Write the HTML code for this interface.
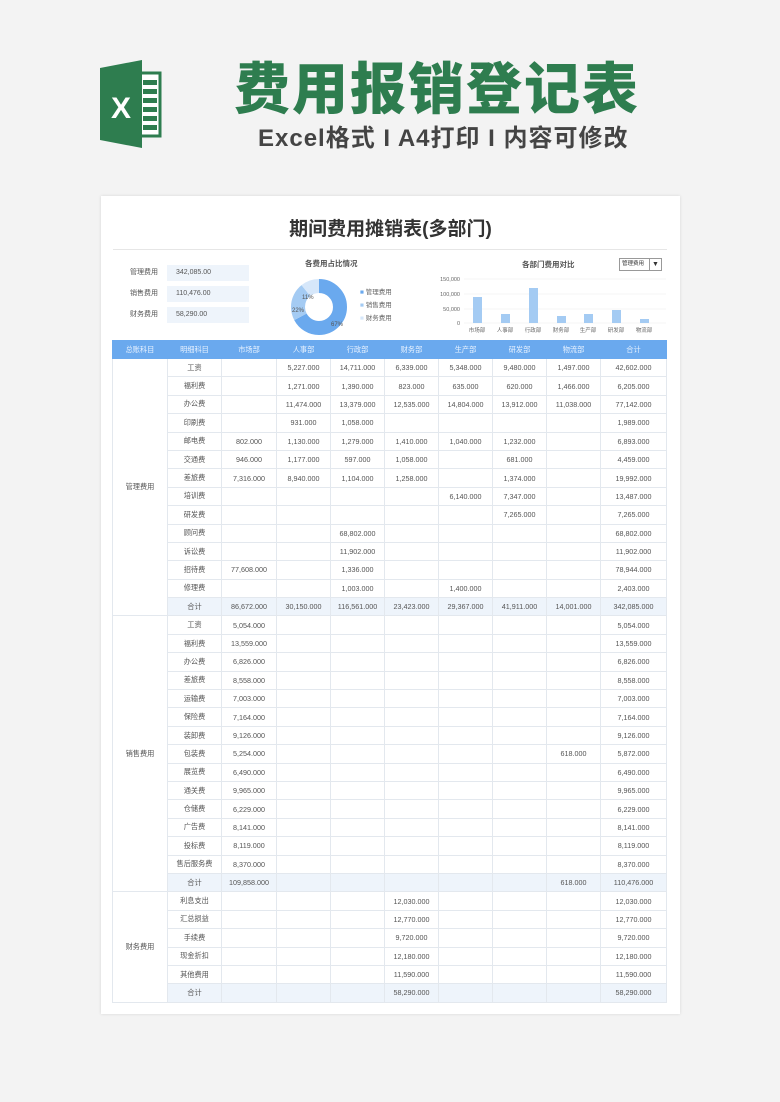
<!DOCTYPE html>
<html><head><meta charset="utf-8">
<style>
*{margin:0;padding:0;box-sizing:border-box}
body{width:780px;height:1102px;background:#f3f3f3;font-family:"Liberation Sans","Noto Sans CJK SC",sans-serif;position:relative;overflow:hidden}
.abs{position:absolute}
.card{left:101px;top:196px;width:579px;height:818px;background:#fff;box-shadow:0 0 3px rgba(0,0,0,.12)}
table{position:absolute;left:112px;top:340px;border-collapse:collapse;table-layout:fixed;font-size:7.2px;color:#555}
td,th{border:1px solid #e3e8ee;height:18.4px;text-align:center;white-space:nowrap;overflow:hidden;font-weight:normal;padding:0}
th{background:#6aa9ee;color:#e8f2ff;border-color:#6aa9ee;height:18px}
tr.tot td{background:#eef4fb}
.lbl{font-size:7px;color:#555;line-height:16px}
.box{background:#eef4fb;font-size:7px;color:#555;padding-left:9px;line-height:16px;height:16px;width:82px;left:167px}
</style></head><body>
<svg class="abs" style="left:100px;top:56px" width="62" height="96" viewBox="0 0 62 96">
<rect x="36" y="17" width="24" height="63" fill="#fff" stroke="#2e7d4f" stroke-width="3"/>
<g fill="#2e7d4f"><rect x="43" y="24" width="14" height="5"/><rect x="43" y="33" width="14" height="5"/><rect x="43" y="42" width="14" height="5"/><rect x="43" y="51" width="14" height="5"/><rect x="43" y="60" width="14" height="5"/><rect x="43" y="69" width="14" height="5"/></g>
<path d="M0 12 L42 4 L42 92 L0 84 Z" fill="#2e7d4f"/>
<text x="21" y="62" font-family="Liberation Sans" font-weight="bold" font-size="30" fill="#fff" text-anchor="middle">X</text>
</svg>
<div class="abs" style="left:234px;top:58px;font-size:56px;font-weight:900;color:#2e7d4f;letter-spacing:2px;line-height:64px;white-space:nowrap">费用报销登记表</div>
<div class="abs" style="left:258px;top:124px;font-size:24px;font-weight:bold;color:#444;line-height:30px;letter-spacing:1px;white-space:nowrap">Excel格式 I A4打印 I 内容可修改</div>

<div class="abs card"></div>
<div class="abs" style="left:101px;top:214px;width:579px;text-align:center;font-size:19px;font-weight:bold;color:#333">期间费用摊销表(多部门)</div>
<div class="abs" style="left:113px;top:249px;width:554px;height:1px;background:#e6e6e6"></div>

<div class="abs lbl" style="left:130px;top:265px">管理费用</div>
<div class="abs lbl" style="left:130px;top:286px">销售费用</div>
<div class="abs lbl" style="left:130px;top:307px">财务费用</div>
<div class="abs box" style="top:265px">342,085.00</div>
<div class="abs box" style="top:286px">110,476.00</div>
<div class="abs box" style="top:307px">58,290.00</div>

<div class="abs" style="left:305px;top:258px;font-size:7.5px;font-weight:bold;color:#555">各费用占比情况</div>
<svg class="abs" style="left:288px;top:276px" width="62" height="62" viewBox="-31 -31 62 62">
<circle r="21" fill="none" stroke="#6aa9ee" stroke-width="14" stroke-dasharray="88.6 132" transform="rotate(-90)"/>
<circle r="21" fill="none" stroke="#a4cbf3" stroke-width="14" stroke-dasharray="0 88.6 29 132" transform="rotate(-90)"/>
<circle r="21" fill="none" stroke="#d6e7fa" stroke-width="14" stroke-dasharray="0 117.6 14.4 132" transform="rotate(-90)"/>
<text x="-17" y="-8" font-size="6" fill="#555">11%</text>
<text x="-27" y="5" font-size="6" fill="#555">22%</text>
<text x="12" y="19" font-size="6" fill="#555">67%</text>
</svg>
<div class="abs" style="left:360px;top:286px;font-size:6.5px;color:#666;line-height:13px">
<div><span style="color:#6aa9ee">■</span> 管理费用</div><div><span style="color:#a4cbf3">■</span> 销售费用</div><div><span style="color:#d6e7fa">■</span> 财务费用</div></div>

<div class="abs" style="left:522px;top:259px;font-size:7.5px;font-weight:bold;color:#555">各部门费用对比</div>
<div class="abs" style="left:619px;top:258px;width:43px;height:13px;border:1px solid #999;font-size:5.5px;line-height:11px;padding-left:2px;color:#333;background:#fff">管理费用<span style="position:absolute;right:0;top:0;width:12px;height:11px;border-left:1px solid #999;text-align:center;font-size:7px">▼</span></div>
<svg class="abs" style="left:430px;top:272px" width="240" height="64">
<g font-size="5.5" fill="#666" text-anchor="end"><text x="30" y="9">150,000</text><text x="30" y="24">100,000</text><text x="30" y="39">50,000</text><text x="30" y="53">0</text></g>
<g stroke="#eee" stroke-width=".6"><line x1="34" y1="7" x2="236" y2="7"/><line x1="34" y1="22" x2="236" y2="22"/><line x1="34" y1="37" x2="236" y2="37"/><line x1="34" y1="51" x2="236" y2="51"/></g>
<g fill="#a4cbf3"><rect x="43" y="25" width="9" height="26"/><rect x="71" y="42" width="9" height="9"/><rect x="99" y="16" width="9" height="35"/><rect x="127" y="44" width="9" height="7"/><rect x="154" y="42" width="9" height="9"/><rect x="182" y="38" width="9" height="13"/><rect x="210" y="47" width="9" height="4"/></g>
<g font-size="5.5" fill="#666" text-anchor="middle"><text x="47" y="60">市场部</text><text x="75" y="60">人事部</text><text x="103" y="60">行政部</text><text x="131" y="60">财务部</text><text x="158" y="60">生产部</text><text x="186" y="60">研发部</text><text x="214" y="60">物流部</text></g>
</svg>

<table>
<colgroup><col style="width:55px"><col style="width:54px"><col style="width:55px"><col style="width:54px"><col style="width:54px"><col style="width:54px"><col style="width:54px"><col style="width:54px"><col style="width:54px"><col style="width:66px"></colgroup>
<tr><th>总账科目</th><th>明细科目</th><th>市场部</th><th>人事部</th><th>行政部</th><th>财务部</th><th>生产部</th><th>研发部</th><th>物流部</th><th>合计</th></tr>
<tr><td rowspan="14">管理费用</td><td>工资</td><td></td><td>5,227.000</td><td>14,711.000</td><td>6,339.000</td><td>5,348.000</td><td>9,480.000</td><td>1,497.000</td><td>42,602.000</td></tr>
<tr><td>福利费</td><td></td><td>1,271.000</td><td>1,390.000</td><td>823.000</td><td>635.000</td><td>620.000</td><td>1,466.000</td><td>6,205.000</td></tr>
<tr><td>办公费</td><td></td><td>11,474.000</td><td>13,379.000</td><td>12,535.000</td><td>14,804.000</td><td>13,912.000</td><td>11,038.000</td><td>77,142.000</td></tr>
<tr><td>印刷费</td><td></td><td>931.000</td><td>1,058.000</td><td></td><td></td><td></td><td></td><td>1,989.000</td></tr>
<tr><td>邮电费</td><td>802.000</td><td>1,130.000</td><td>1,279.000</td><td>1,410.000</td><td>1,040.000</td><td>1,232.000</td><td></td><td>6,893.000</td></tr>
<tr><td>交通费</td><td>946.000</td><td>1,177.000</td><td>597.000</td><td>1,058.000</td><td></td><td>681.000</td><td></td><td>4,459.000</td></tr>
<tr><td>差旅费</td><td>7,316.000</td><td>8,940.000</td><td>1,104.000</td><td>1,258.000</td><td></td><td>1,374.000</td><td></td><td>19,992.000</td></tr>
<tr><td>培训费</td><td></td><td></td><td></td><td></td><td>6,140.000</td><td>7,347.000</td><td></td><td>13,487.000</td></tr>
<tr><td>研发费</td><td></td><td></td><td></td><td></td><td></td><td>7,265.000</td><td></td><td>7,265.000</td></tr>
<tr><td>顾问费</td><td></td><td></td><td>68,802.000</td><td></td><td></td><td></td><td></td><td>68,802.000</td></tr>
<tr><td>诉讼费</td><td></td><td></td><td>11,902.000</td><td></td><td></td><td></td><td></td><td>11,902.000</td></tr>
<tr><td>招待费</td><td>77,608.000</td><td></td><td>1,336.000</td><td></td><td></td><td></td><td></td><td>78,944.000</td></tr>
<tr><td>修理费</td><td></td><td></td><td>1,003.000</td><td></td><td>1,400.000</td><td></td><td></td><td>2,403.000</td></tr>
<tr class="tot"><td>合计</td><td>86,672.000</td><td>30,150.000</td><td>116,561.000</td><td>23,423.000</td><td>29,367.000</td><td>41,911.000</td><td>14,001.000</td><td>342,085.000</td></tr>
<tr><td rowspan="15">销售费用</td><td>工资</td><td>5,054.000</td><td></td><td></td><td></td><td></td><td></td><td></td><td>5,054.000</td></tr>
<tr><td>福利费</td><td>13,559.000</td><td></td><td></td><td></td><td></td><td></td><td></td><td>13,559.000</td></tr>
<tr><td>办公费</td><td>6,826.000</td><td></td><td></td><td></td><td></td><td></td><td></td><td>6,826.000</td></tr>
<tr><td>差旅费</td><td>8,558.000</td><td></td><td></td><td></td><td></td><td></td><td></td><td>8,558.000</td></tr>
<tr><td>运输费</td><td>7,003.000</td><td></td><td></td><td></td><td></td><td></td><td></td><td>7,003.000</td></tr>
<tr><td>保险费</td><td>7,164.000</td><td></td><td></td><td></td><td></td><td></td><td></td><td>7,164.000</td></tr>
<tr><td>装卸费</td><td>9,126.000</td><td></td><td></td><td></td><td></td><td></td><td></td><td>9,126.000</td></tr>
<tr><td>包装费</td><td>5,254.000</td><td></td><td></td><td></td><td></td><td></td><td>618.000</td><td>5,872.000</td></tr>
<tr><td>展览费</td><td>6,490.000</td><td></td><td></td><td></td><td></td><td></td><td></td><td>6,490.000</td></tr>
<tr><td>通关费</td><td>9,965.000</td><td></td><td></td><td></td><td></td><td></td><td></td><td>9,965.000</td></tr>
<tr><td>仓储费</td><td>6,229.000</td><td></td><td></td><td></td><td></td><td></td><td></td><td>6,229.000</td></tr>
<tr><td>广告费</td><td>8,141.000</td><td></td><td></td><td></td><td></td><td></td><td></td><td>8,141.000</td></tr>
<tr><td>投标费</td><td>8,119.000</td><td></td><td></td><td></td><td></td><td></td><td></td><td>8,119.000</td></tr>
<tr><td>售后服务费</td><td>8,370.000</td><td></td><td></td><td></td><td></td><td></td><td></td><td>8,370.000</td></tr>
<tr class="tot"><td>合计</td><td>109,858.000</td><td></td><td></td><td></td><td></td><td></td><td>618.000</td><td>110,476.000</td></tr>
<tr><td rowspan="6">财务费用</td><td>利息支出</td><td></td><td></td><td></td><td>12,030.000</td><td></td><td></td><td></td><td>12,030.000</td></tr>
<tr><td>汇总损益</td><td></td><td></td><td></td><td>12,770.000</td><td></td><td></td><td></td><td>12,770.000</td></tr>
<tr><td>手续费</td><td></td><td></td><td></td><td>9,720.000</td><td></td><td></td><td></td><td>9,720.000</td></tr>
<tr><td>现金折扣</td><td></td><td></td><td></td><td>12,180.000</td><td></td><td></td><td></td><td>12,180.000</td></tr>
<tr><td>其他费用</td><td></td><td></td><td></td><td>11,590.000</td><td></td><td></td><td></td><td>11,590.000</td></tr>
<tr class="tot"><td>合计</td><td></td><td></td><td></td><td>58,290.000</td><td></td><td></td><td></td><td>58,290.000</td></tr>
</table>
</body></html>
